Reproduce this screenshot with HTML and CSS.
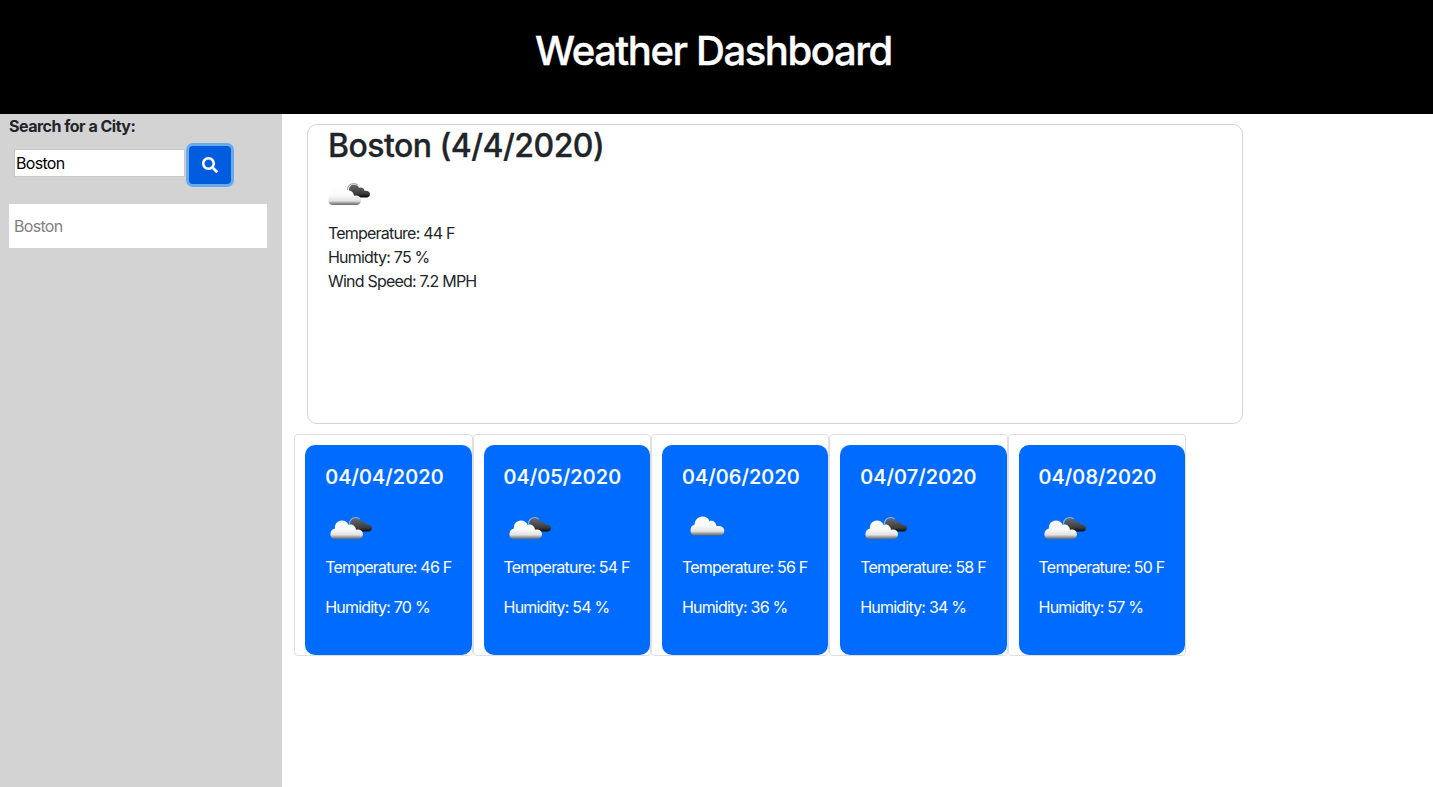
FILE: index.html
```html
<!DOCTYPE html>
<html lang="en">
<head>
<meta charset="utf-8">
<title>Weather Dashboard</title>
<link rel="stylesheet" href="styles.css">
</head>
<body>
<svg class="defs" width="0" height="0" aria-hidden="true">
  <defs>
    <linearGradient id="light" x1="0" y1="0" x2="0" y2="1"><stop offset="0" stop-color="#fff"/><stop offset=".5" stop-color="#f9f9f9"/><stop offset=".78" stop-color="#e2e2e2"/><stop offset=".87" stop-color="#aaa"/><stop offset="1" stop-color="#666"/></linearGradient>
    <linearGradient id="dark" x1="0" y1="0" x2="0" y2="1"><stop offset="0" stop-color="#686868"/><stop offset=".7" stop-color="#3c3c3c"/><stop offset="1" stop-color="#080808"/></linearGradient>
    <symbol id="cloud" viewBox="0 0 34 20"><path fill="url(#light)" d="M5 19.500C2 19.500 0 17.400 0 14.400 0 11.500 1.500 9.300 4.200 8.600 4 4.300 7.500.5 11.800.5c3.800 0 6.200 1.700 7 4.500 3.600-.9 6.800 1.200 7.300 5.200 4.200-.8 7.700 1.200 7.700 4.600 0 2.900-2 4.700-5 4.700Z"/></symbol>
    <symbol id="clouds" viewBox="0 0 43 24"><path fill="url(#dark)" d="M21 8.500C20.800 4.700 23 2.700 26 2.700c2.500 0 4.300 1 5 3 2.800-1 5.200.6 5.600 3.200 3-.5 5.400 1 5.400 3.300S40 15.600 37.500 15.600H29c-5 0-7.500-3-8-7.100Z"/><path fill="none" stroke="#a8a8a8" stroke-width="1.200" d="M19.300 8C19.800 4.200 22.500 1.700 26 1.700c1.500 0 2.800.5 3.700 1.500"/><path fill="url(#light)" d="M5 23C2 23 .4 21 .4 18.200c0-2.800 1.600-5 4.500-5.700C4.500 8 7.500 4.400 11.800 4.400c3.500 0 5.800 1.600 6.600 4.400 4-1 7.200 1.200 7.600 5 4-.8 7 1.200 7 4.600 0 2.700-2 4.600-5 4.600Z"/></symbol>
  </defs>
</svg>
<header class="header"><h1 class="title">Weather Dashboard</h1></header>
<div class="layout">
  <aside class="sidebar">
    <label class="label" for="city">Search for a City:</label>
    <form class="search">
      <input class="field" id="city" type="text" value="Boston">
      <button class="button" type="button" aria-label="Search"><svg width="16" height="16" viewBox="0 0 512 512"><path fill="#fff" d="M505 442.700 405.300 343c-4.500-4.500-10.600-7-17-7H372c27.600-35.300 44-79.700 44-128C416 93.100 322.900 0 208 0S0 93.100 0 208s93.100 208 208 208c48.300 0 92.700-16.400 128-44v16.300c0 6.400 2.500 12.500 7 17l99.700 99.700c9.400 9.400 24.600 9.400 33.900 0l28.300-28.300c9.400-9.400 9.400-24.600.1-34ZM208 336c-70.700 0-128-57.200-128-128 0-70.700 57.200-128 128-128 70.700 0 128 57.200 128 128 0 70.700-57.200 128-128 128Z"/></svg></button>
    </form>
    <div class="history">Boston</div>
  </aside>
  <main class="main">
    <section class="current">
      <h2 class="city">Boston (4/4/2020)</h2>
      <svg class="current-icon" width="43" height="24"><use href="#clouds"/></svg>
      <p class="line">Temperature: 44 F</p>
      <p class="line">Humidty: 75 %</p>
      <p class="line">Wind Speed: 7.2 MPH</p>
    </section>
    <section class="forecast">
      <div class="day"><article class="card"><h3 class="date">04/04/2020</h3><svg class="icon" width="43" height="24"><use href="#clouds"/></svg><p class="stat">Temperature: 46 F</p><p class="stat">Humidity: 70 %</p></article></div>
      <div class="day"><article class="card"><h3 class="date">04/05/2020</h3><svg class="icon" width="43" height="24"><use href="#clouds"/></svg><p class="stat">Temperature: 54 F</p><p class="stat">Humidity: 54 %</p></article></div>
      <div class="day"><article class="card"><h3 class="date">04/06/2020</h3><svg class="icon single" width="35" height="20"><use href="#cloud"/></svg><p class="stat">Temperature: 56 F</p><p class="stat">Humidity: 36 %</p></article></div>
      <div class="day"><article class="card"><h3 class="date">04/07/2020</h3><svg class="icon" width="43" height="24"><use href="#clouds"/></svg><p class="stat">Temperature: 58 F</p><p class="stat">Humidity: 34 %</p></article></div>
      <div class="day"><article class="card"><h3 class="date">04/08/2020</h3><svg class="icon" width="43" height="24"><use href="#clouds"/></svg><p class="stat">Temperature: 50 F</p><p class="stat">Humidity: 57 %</p></article></div>
    </section>
  </main>
</div>
</body>
</html>
```
FILE: styles.css
```css
* { box-sizing: border-box; }
body { margin: 0; font: 16px/24px Inter, sans-serif; letter-spacing: -0.79px; color: #212529; background: #fff; }
h1, h2, h3, p { margin: 0; }
svg { display: block; }
.defs { position: absolute; }
.header { height: 114px; padding: 27px 6px 0 0; background: #000; color: #fff; text-align: center; }
.title { font-size: 40px; line-height: 48px; font-weight: 500; letter-spacing: -1.4px; -webkit-text-stroke: 0.4px; }
.layout { display: flex; height: 673px; }
.sidebar { width: 282px; padding: 0 15px 0 9px; background: #d3d3d3; }
.label { display: block; font-weight: 700; letter-spacing: -0.5px; }
.search { display: flex; align-items: flex-start; padding: 8px 0 0 5px; }
.field { width: 171px; height: 28px; margin: 3px 4px 0 0; padding: 1px; border: 1px solid #c8c8c8; border-radius: 0; background: #fff; color: #000; font: inherit; letter-spacing: -0.7px; }
.button { display: flex; align-items: center; justify-content: center; width: 42px; height: 38px; padding: 0; border: 0; border-radius: 4px; background: #005cdf; box-shadow: 0 0 0 3px #68abed; }
.history { height: 44px; margin-top: 20px; padding: 10px 5px; background: #fff; color: #808080; letter-spacing: -0.7px; }
.main { flex: 1; padding: 10px 0 0 12.2px; }
.current { width: 936px; height: 300px; margin-left: 12.8px; padding: 1px 20px; border: 1px solid #d3d3d3; border-radius: 10px; }
.city { padding-top: 1px; font-size: 32px; line-height: 38px; font-weight: 500; letter-spacing: -0.53px; -webkit-text-stroke: 0.3px; }
.current-icon { margin: 17px 0 15px; }
.forecast { display: flex; margin-top: 10px; }
.day { width: 178.35px; height: 222px; padding: 10px 0 0 10px; border: 1px solid #dfdfdf; border-radius: 4px; }
.card { height: 210px; padding: 20px; border-radius: 10px; background: #006bff; color: #fff; white-space: nowrap; }
.date { font-size: 20px; line-height: 24px; font-weight: 500; letter-spacing: 0.12px; -webkit-text-stroke: 0.2px; }
.icon { margin: 27px 0 15px 5px; }
.single { margin: 27px 0 19px 8px; }
.stat { margin-bottom: 16px; }
```
